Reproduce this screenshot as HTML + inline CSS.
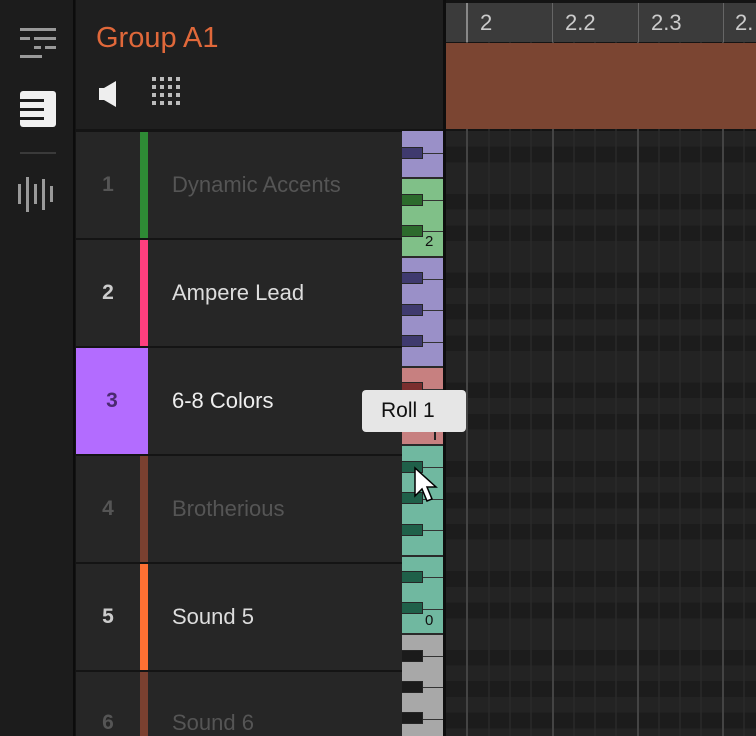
<!DOCTYPE html>
<html><head><meta charset="utf-8"><style>
*{margin:0;padding:0;box-sizing:border-box}
html,body{width:756px;height:736px;overflow:hidden}
body{background:#141414;font-family:"Liberation Sans",sans-serif}
#w{position:relative;width:756px;height:736px;overflow:hidden}
.a{position:absolute}
.side{left:0;top:0;width:75px;height:736px;background:#1c1c1c;border-right:2px solid #0c0c0c}
.hdr{left:76px;top:0;width:369px;height:129px;background:#1f1f1f}
.row{left:76px;width:326px;height:106px;background:#262626;overflow:hidden}
.num{position:absolute;left:0;top:0;width:64px;height:106px;font-size:21px;font-weight:bold;text-align:center;line-height:106px}
.strip{position:absolute;left:64px;top:0;width:8px;height:106px}
.name{position:absolute;left:96px;top:0;line-height:106px;font-size:22px;white-space:nowrap}
.bk{position:absolute;left:402px;width:21px;height:12px;border:1px solid #262626;border-left:none}
.sep{position:absolute;left:423px;width:20px;height:1px;background:#333}
.bnd{position:absolute;left:402px;width:41px;height:2px;background:#2a2a2a}
svg{display:block}
</style></head><body><div id="w">
<div class="a side"></div>
<div class="a" style="left:20px;top:28px;width:36px;height:3px;background:#999"></div>
<div class="a" style="left:20px;top:37px;width:10px;height:3px;background:#999"></div>
<div class="a" style="left:34px;top:37px;width:22px;height:3px;background:#999"></div>
<div class="a" style="left:34px;top:46px;width:7px;height:3px;background:#999"></div>
<div class="a" style="left:45px;top:46px;width:11px;height:3px;background:#999"></div>
<div class="a" style="left:20px;top:55px;width:22px;height:3px;background:#999"></div>
<div class="a" style="left:20px;top:91px;width:36px;height:36px;background:#f0f0f0;border-radius:3px"></div>
<div class="a" style="left:20px;top:99px;width:24px;height:3px;background:#1c1c1c"></div>
<div class="a" style="left:20px;top:108px;width:24px;height:3px;background:#1c1c1c"></div>
<div class="a" style="left:20px;top:117px;width:24px;height:3px;background:#1c1c1c"></div>
<div class="a" style="left:20px;top:152px;width:36px;height:2px;background:#3a3a3a"></div>
<div class="a" style="left:18px;top:184px;width:3px;height:20px;background:#999"></div>
<div class="a" style="left:26px;top:177px;width:3px;height:35px;background:#999"></div>
<div class="a" style="left:34px;top:184px;width:3px;height:20px;background:#999"></div>
<div class="a" style="left:42px;top:179px;width:3px;height:31px;background:#999"></div>
<div class="a" style="left:50px;top:186px;width:3px;height:16px;background:#999"></div>

<div class="a hdr"></div>
<div class="a" style="left:96px;top:22px;font-size:29px;color:#e0683a">Group A1</div>
<svg class="a" style="left:98px;top:80px" width="20" height="28"><path d="M1 8H6L18 1V27L6 20H1Z" fill="#eee"/></svg>
<svg class="a" style="left:152px;top:77px" width="34" height="32"><g fill="#bbb">
<rect x="0" y="0" width="4" height="4"/><rect x="8" y="0" width="4" height="4"/><rect x="16" y="0" width="4" height="4"/><rect x="24" y="0" width="4" height="4"/>
<rect x="0" y="8" width="4" height="4"/><rect x="8" y="8" width="4" height="4"/><rect x="16" y="8" width="4" height="4"/><rect x="24" y="8" width="4" height="4"/>
<rect x="0" y="16" width="4" height="4"/><rect x="8" y="16" width="4" height="4"/><rect x="16" y="16" width="4" height="4"/><rect x="24" y="16" width="4" height="4"/>
<rect x="0" y="24" width="4" height="4"/><rect x="8" y="24" width="4" height="4"/><rect x="16" y="24" width="4" height="4"/><rect x="24" y="24" width="4" height="4"/></g></svg>

<div class="a row" style="top:132px"><div class="num" style="color:#555">1</div><div class="strip" style="background:#2e8b35"></div><div class="name" style="color:#555">Dynamic Accents</div></div>
<div class="a row" style="top:240px"><div class="num" style="color:#ccc">2</div><div class="strip" style="background:#ff3f7f"></div><div class="name" style="color:#ddd">Ampere Lead</div></div>
<div class="a row" style="top:348px"><div class="num" style="background:#b36cff;width:72px;color:#4a2a70">3</div><div class="name" style="color:#eee">6-8 Colors</div></div>
<div class="a row" style="top:456px"><div class="num" style="color:#555">4</div><div class="strip" style="background:#7a4030"></div><div class="name" style="color:#555">Brotherious</div></div>
<div class="a row" style="top:564px"><div class="num" style="color:#ccc">5</div><div class="strip" style="background:#ff7033"></div><div class="name" style="color:#ddd">Sound 5</div></div>
<div class="a row" style="top:672px;height:64px"><div class="num" style="color:#555;line-height:102px">6</div><div class="strip" style="background:#7a4030"></div><div class="name" style="color:#555;line-height:102px">Sound 6</div></div>

<div class="a" style="left:446px;top:131px;width:310px;height:605px;background:repeating-linear-gradient(to bottom,#232323 0,#232323 15.72px,#1c1c1c 15.72px,#1c1c1c 31.44px,#232323 31.44px,#232323 62.88px,#1c1c1c 62.88px,#1c1c1c 78.6px,#232323 78.6px,#232323 94.32px,#1c1c1c 94.32px,#1c1c1c 110.04px,#232323 110.04px,#232323 141.48px,#1c1c1c 141.48px,#1c1c1c 157.2px,#232323 157.2px,#232323 172.92px,#1c1c1c 172.92px,#1c1c1c 188.64px)"></div>
<svg class="a" style="left:446px;top:42px" width="310" height="694"><g stroke="#2a2a2a" stroke-width="1.5">
<line x1="43" y1="0" x2="43" y2="694"/><line x1="64" y1="0" x2="64" y2="694"/><line x1="85" y1="0" x2="85" y2="694"/>
<line x1="128" y1="0" x2="128" y2="694"/><line x1="149" y1="0" x2="149" y2="694"/><line x1="170" y1="0" x2="170" y2="694"/>
<line x1="213" y1="0" x2="213" y2="694"/><line x1="234" y1="0" x2="234" y2="694"/><line x1="255" y1="0" x2="255" y2="694"/>
<line x1="298" y1="0" x2="298" y2="694"/></g>
<g stroke="#444" stroke-width="2"><line x1="21" y1="0" x2="21" y2="694"/><line x1="107" y1="0" x2="107" y2="694"/><line x1="192" y1="0" x2="192" y2="694"/><line x1="277" y1="0" x2="277" y2="694"/></g></svg>
<div class="a" style="left:446px;top:3px;width:310px;height:39px;background:#3b3b3b"></div>
<div class="a" style="left:466px;top:3px;width:2px;height:39px;background:#888"></div>
<div class="a" style="left:552px;top:3px;width:1px;height:39px;background:#666"></div>
<div class="a" style="left:638px;top:3px;width:1px;height:39px;background:#666"></div>
<div class="a" style="left:723px;top:3px;width:1px;height:39px;background:#666"></div>
<div class="a" style="left:480px;top:10px;font-size:22px;color:#ccc">2</div>
<div class="a" style="left:565px;top:10px;font-size:22px;color:#ccc">2.2</div>
<div class="a" style="left:651px;top:10px;font-size:22px;color:#ccc">2.3</div>
<div class="a" style="left:735px;top:10px;font-size:22px;color:#ccc">2.</div>
<div class="a" style="left:446px;top:43px;width:310px;height:86px;background:#7b4532"></div>
<div class="a" style="left:443px;top:0;width:3px;height:736px;background:#0e0e0e"></div>

<div class="a" style="left:402px;top:131px;width:41px;height:47px;background:#9a90c8"></div>
<div class="a" style="left:402px;top:178px;width:41px;height:79px;background:#80c088"></div>
<div class="a" style="left:402px;top:257px;width:41px;height:110px;background:#9a90c8"></div>
<div class="a" style="left:402px;top:367px;width:41px;height:78px;background:#c78080"></div>
<div class="a" style="left:402px;top:445px;width:41px;height:189px;background:#70b8a0"></div>
<div class="a" style="left:402px;top:634px;width:41px;height:102px;background:#a8a8a8"></div>
<div class="bnd" style="top:177px"></div><div class="bnd" style="top:256px"></div><div class="bnd" style="top:366px"></div><div class="bnd" style="top:444px"></div><div class="bnd" style="top:555px"></div><div class="bnd" style="top:633px"></div>
<div class="bk" style="top:147px;background:#3f3a6e"></div><div class="sep" style="top:153px"></div>
<div class="bk" style="top:194px;background:#2c6a2c"></div><div class="sep" style="top:200px"></div>
<div class="bk" style="top:225px;background:#2c6a2c"></div><div class="sep" style="top:231px"></div>
<div class="bk" style="top:272px;background:#3f3a6e"></div><div class="sep" style="top:279px"></div>
<div class="bk" style="top:304px;background:#3f3a6e"></div><div class="sep" style="top:310px"></div>
<div class="bk" style="top:335px;background:#3f3a6e"></div><div class="sep" style="top:342px"></div>
<div class="bk" style="top:382px;background:#7a2e2e"></div><div class="sep" style="top:389px"></div>
<div class="bk" style="top:414px;background:#7a2e2e"></div><div class="sep" style="top:420px"></div>
<div class="bk" style="top:461px;background:#1f6049"></div><div class="sep" style="top:467px"></div>
<div class="bk" style="top:492px;background:#1f6049"></div><div class="sep" style="top:499px"></div>
<div class="bk" style="top:524px;background:#1f6049"></div><div class="sep" style="top:530px"></div>
<div class="bk" style="top:571px;background:#1f6049"></div><div class="sep" style="top:577px"></div>
<div class="bk" style="top:602px;background:#1f6049"></div><div class="sep" style="top:609px"></div>
<div class="bk" style="top:650px;background:#1b1b1b"></div><div class="sep" style="top:656px"></div>
<div class="bk" style="top:681px;background:#1b1b1b"></div><div class="sep" style="top:687px"></div>
<div class="bk" style="top:712px;background:#1b1b1b"></div><div class="sep" style="top:719px"></div>
<div class="a" style="left:425px;top:233px;font-size:15px;color:#111">2</div>
<div class="a" style="left:425px;top:612px;font-size:15px;color:#111">0</div>
<div class="a" style="left:434px;top:428px;width:2px;height:12px;background:#222"></div>

<div class="a" style="left:362px;top:390px;width:104px;height:42px;background:#e6e6e6;border-radius:4px;font-size:21px;line-height:42px;color:#111;padding-left:19px">Roll 1</div>
<svg class="a" style="left:413px;top:466px" width="26" height="40"><path d="M2 2L2 30L9 23L14 35L19 33L14 21L23 21Z" fill="#fff" stroke="#000" stroke-width="1.5"/></svg>
</div></body></html>
